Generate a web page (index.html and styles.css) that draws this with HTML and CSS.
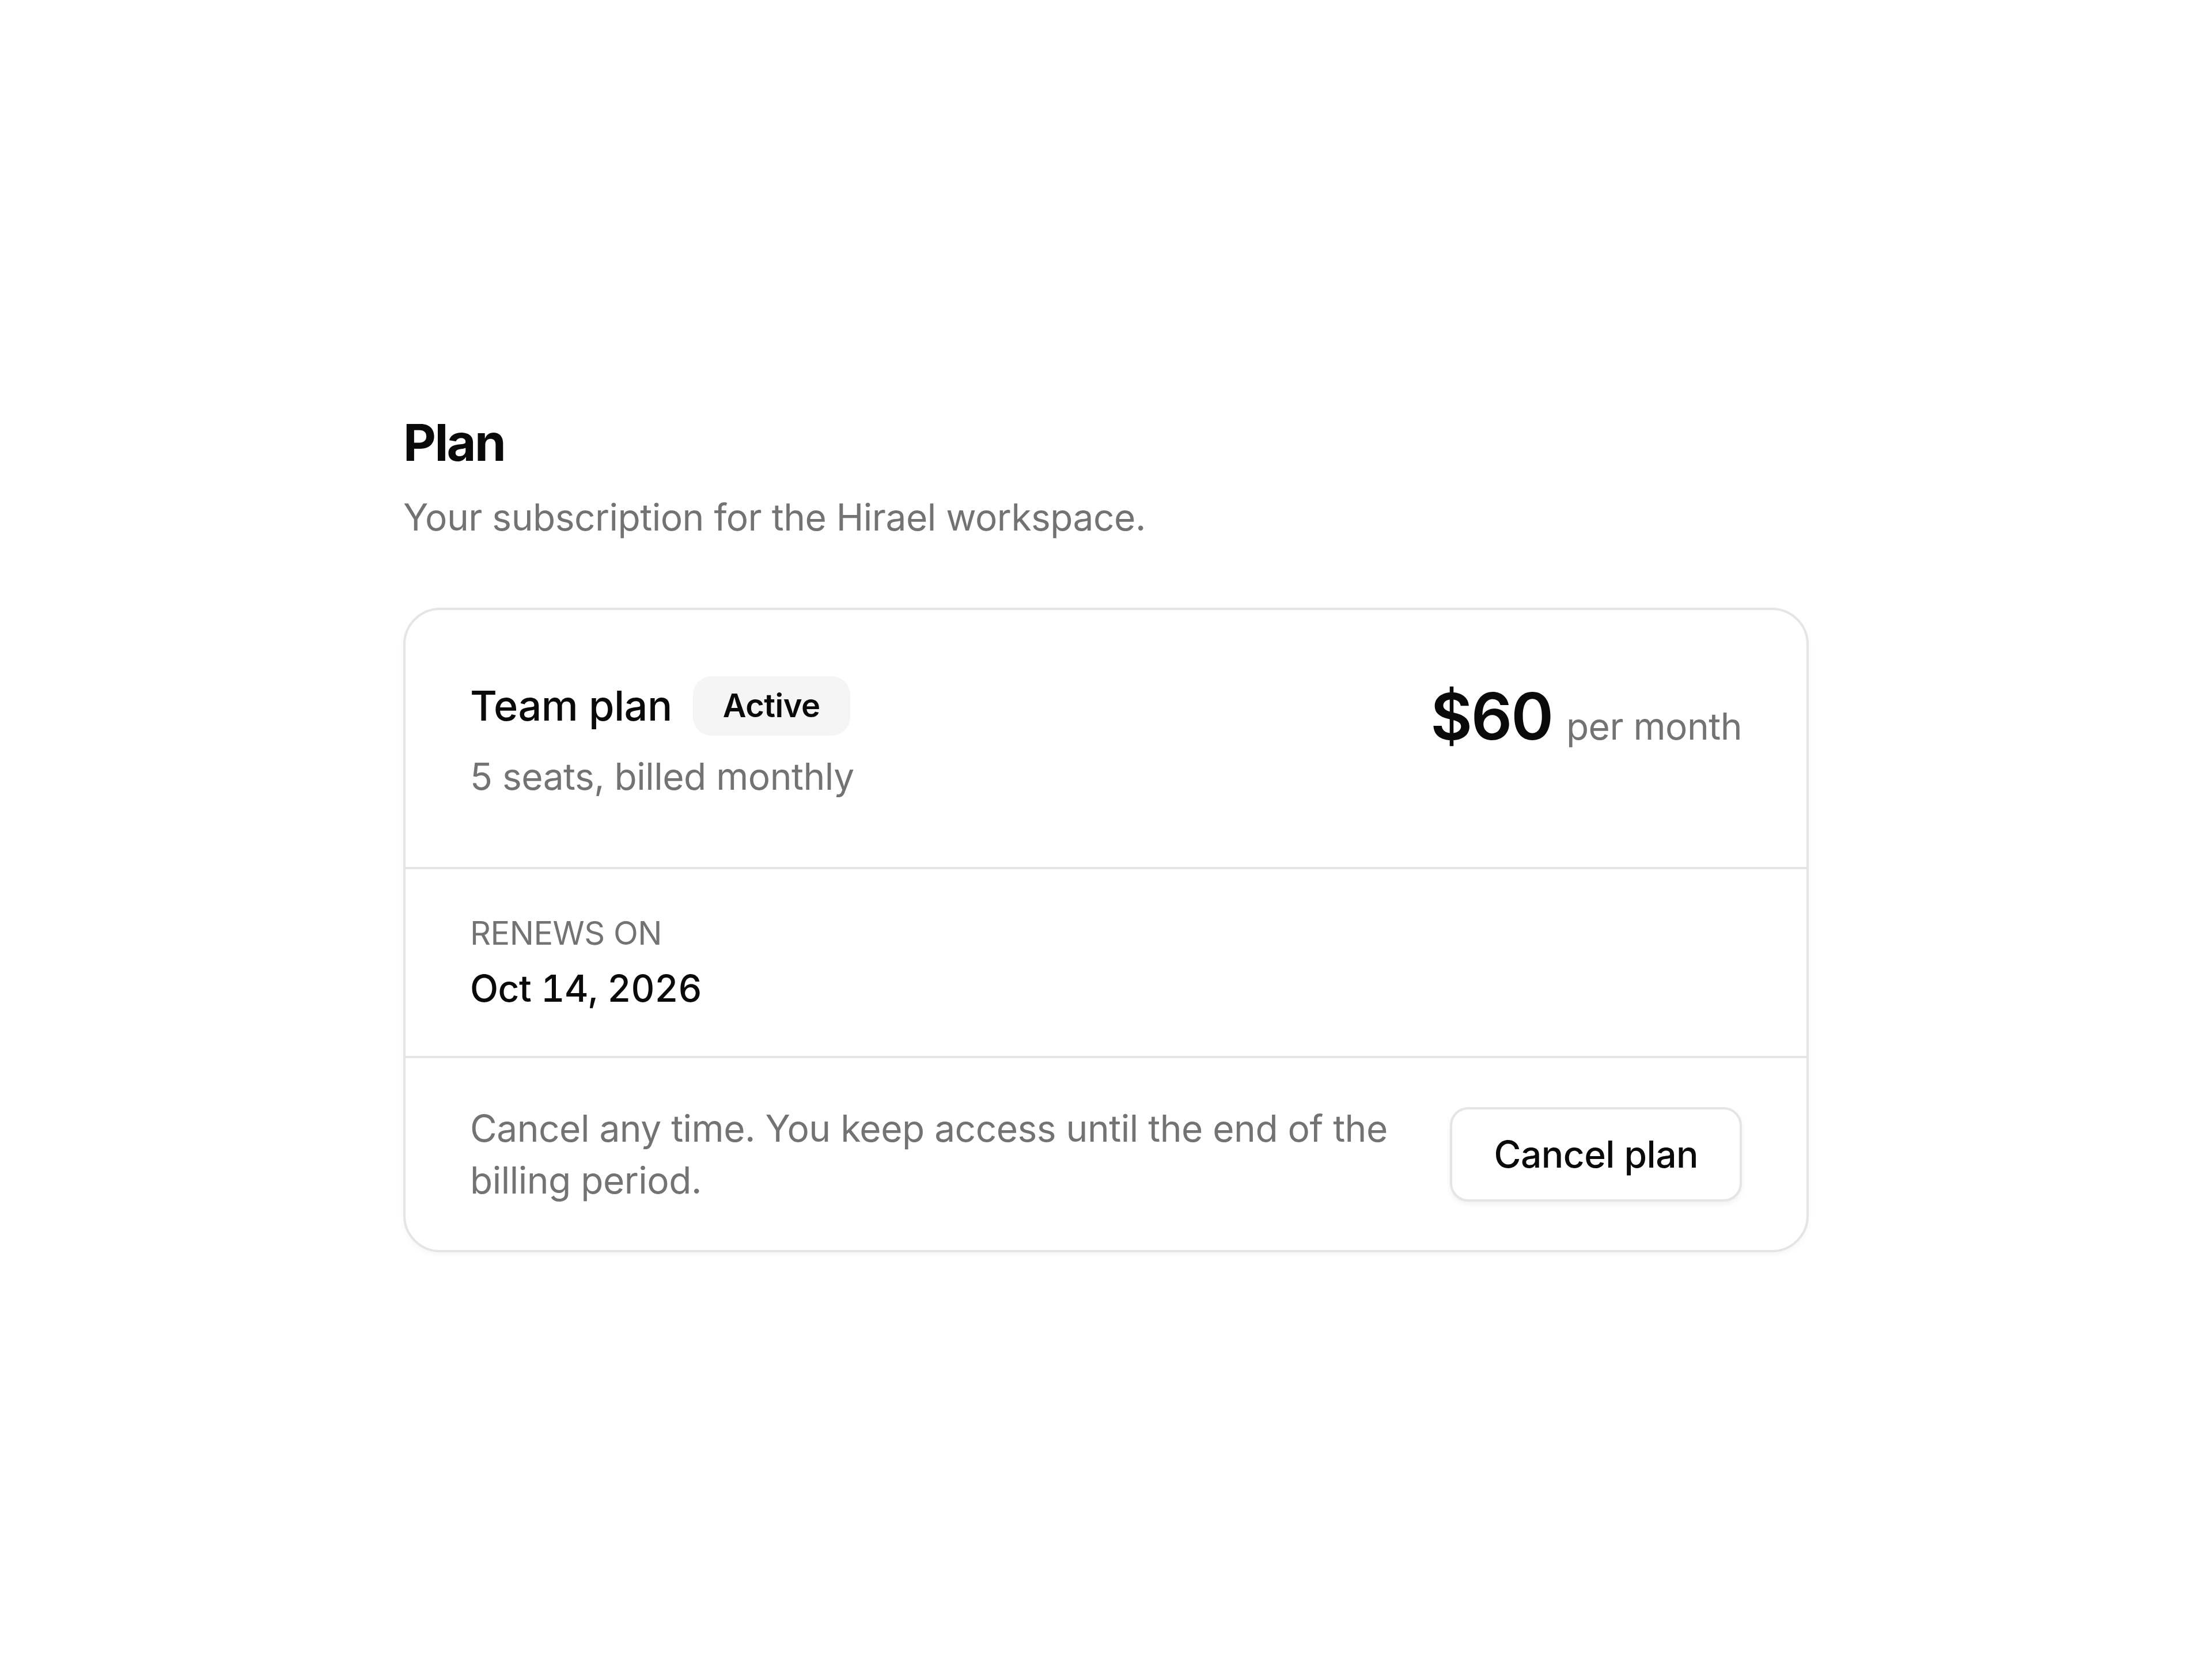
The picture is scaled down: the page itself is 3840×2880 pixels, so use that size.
FILE: index.html
```html
<!DOCTYPE html>
<html>
<head>
  <title>Plan</title>
  <link rel="stylesheet" href="styles.css">
</head>
<body>
  <div class="page">
    <div class="plan">
      <h1 class="plan-heading">Plan</h1>
      <p class="plan-sub">Your subscription for the Hirael workspace.</p>

      <div class="card">
        <div class="card-section summary">
          <div>
            <div class="title-row">
              <span class="plan-name">Team plan</span>
              <span class="badge">Active</span>
            </div>
            <div class="seats">5 seats, billed monthly</div>
          </div>
          <div class="price">
            <span class="amount">$60</span>
            <span class="period">per month</span>
          </div>
        </div>

        <div class="card-section renew">
          <div class="label">RENEWS ON</div>
          <div class="date">Oct 14, 2026</div>
        </div>

        <div class="card-section cancel">
          <p class="note">Cancel any time. You keep access until the end of the billing period.</p>
          <button class="btn" type="button">Cancel plan</button>
        </div>
      </div>
    </div>
  </div>
</body>
</html>
```

FILE: styles.css
```css
body {
  margin: 0;
  padding: 0;
  background-color: #ffffff;
  color: #0a0a0a;
  font-family: Inter, "Noto Sans", sans-serif;
  letter-spacing: -0.5px;
}

.page {
  min-height: 100vh;
  display: flex;
  justify-content: center;
  align-items: center;
}

.plan {
  width: 2440px;
}

.plan-heading {
  margin: 0;
  font-size: 88px;
  line-height: 124px;
  font-weight: 700;
  letter-spacing: -0.03em;
}

.plan-sub {
  margin: 23px 0 0;
  font-size: 64px;
  line-height: 1.4;
  color: #737373;
}

.card {
  margin-top: 113px;
  border: 4px solid #e5e5e5;
  border-radius: 64px;
  background-color: #ffffff;
  box-shadow: 0 4px 8px rgba(0, 0, 0, 0.04);
}

.card-section {
  padding: 72px 112px;
}

.card-section + .card-section {
  border-top: 4px solid #e5e5e5;
}

/* top row: name, badge and price */
.summary {
  display: flex;
  justify-content: space-between;
  align-items: flex-start;
  padding: 112px;
}

.title-row {
  display: flex;
  align-items: center;
  gap: 36px;
}

.plan-name {
  font-size: 72px;
  line-height: 1.5;
  font-weight: 500;
}

.badge {
  padding: 12px 52px;
  border-radius: 32px;
  background-color: #f5f5f5;
  font-size: 56px;
  line-height: 1.4;
  font-weight: 600;
}

.seats {
  margin-top: 24px;
  font-size: 64px;
  line-height: 1.4;
  color: #737373;
}

.price {
  display: flex;
  align-items: baseline;
  gap: 24px;
}

.amount {
  font-size: 112px;
  line-height: 1.3;
  font-weight: 600;
  letter-spacing: -0.02em;
}

.period {
  font-size: 64px;
  color: #737373;
}

.label {
  font-size: 56px;
  line-height: 1.4;
  color: #737373;
}

.date {
  margin-top: 12px;
  font-size: 64px;
  line-height: 1.4;
  font-weight: 500;
  font-variant-numeric: tabular-nums;
}

.cancel {
  display: flex;
  align-items: center;
  gap: 64px;
  padding: 77px 112px;
}

.note {
  flex: 1;
  margin: 0;
  font-size: 64px;
  line-height: 1.4;
  color: #737373;
}

.btn {
  padding: 34px 72px;
  border: 4px solid #e5e5e5;
  border-radius: 32px;
  background-color: #ffffff;
  box-shadow: 0 4px 8px rgba(0, 0, 0, 0.06);
  color: #0a0a0a;
  font-family: inherit;
  font-size: 64px;
  line-height: 88px;
  font-weight: 500;
  letter-spacing: -0.5px;
}
```
